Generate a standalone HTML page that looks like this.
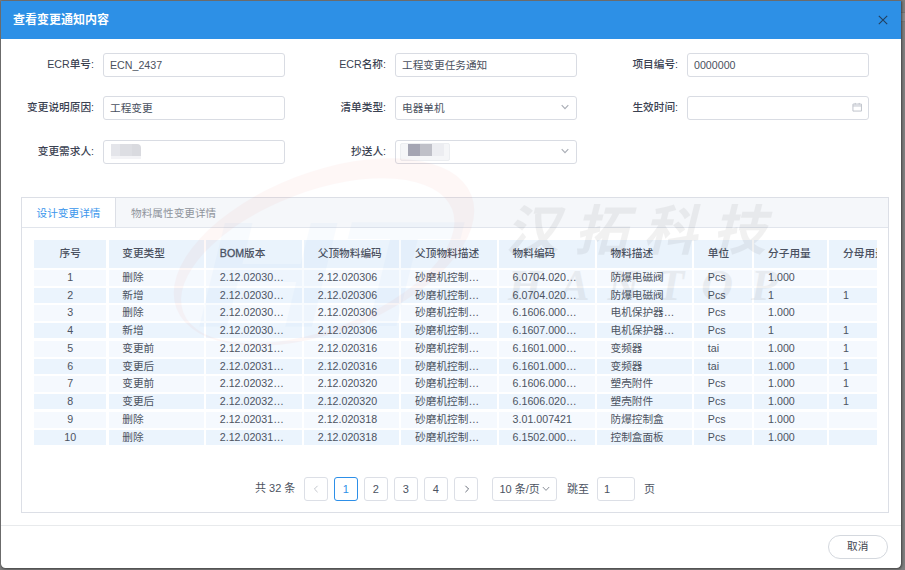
<!DOCTYPE html><html lang="zh-CN"><head><meta charset="utf-8"><title>查看变更通知内容</title><style>*{box-sizing:border-box;margin:0;padding:0}
html,body{width:905px;height:570px;overflow:hidden}
body{background:#808080;font-family:"Liberation Sans","Noto Sans CJK SC",sans-serif;font-size:10.67px;color:#3f4550;position:relative}
.abs{position:absolute}
.modal{position:absolute;left:1px;top:1px;width:900px;height:566.5px;background:#fff;border-radius:0 0 4.5px 4.5px;overflow:hidden;box-shadow:0.5px 0.5px 2.5px rgba(0,0,0,.5)}
.hdr{position:absolute;left:0;top:0;width:900px;height:38px;background:#2d90e6}
.title{position:absolute;left:13px;top:11px;height:18px;line-height:18px;color:#fff;font-weight:bold;font-size:12px;white-space:nowrap}
.lbl{position:absolute;height:24px;line-height:22px;font-weight:500;text-align:right;width:90px;white-space:nowrap;color:#3a4151;font-size:10.67px;}
.inp{position:absolute;height:23.5px;width:182px;border:1px solid #d9dce3;border-radius:3px;background:#fff;line-height:23.5px;padding-left:6px;font-size:10.67px;color:#4a5160;white-space:nowrap}
.tabs{position:absolute;left:21px;top:197px;width:868px;height:316px;border:1px solid #dcdfe6}
.tabbar{position:absolute;left:0;top:0;width:866px;height:30px;background:#f5f7fa;border-bottom:1px solid #e1e5ec}
.tab{position:absolute;top:0;height:30px;line-height:31.5px;font-size:10.67px;white-space:nowrap}
.tab.on{left:0;width:94px;background:#fff;color:#3a96ec;border-right:1px solid #dcdfe6;height:29px;text-align:center}
.tab.off{left:109px;color:#8f949c}
.tbl{position:absolute;left:0;top:0}
.th{position:absolute;top:240.3px;height:27.3px;line-height:26.5px;background:#eaf3fc;font-weight:500;color:#4a5160;padding-left:13.8px;white-space:nowrap;overflow:hidden;font-size:10.67px;}
.th.c,.td.c{text-align:center;padding-left:0}
.td{position:absolute;height:15.1px;line-height:15.1px;background:#f5f9fe;color:#4c5361;padding-left:13.8px;white-space:nowrap;overflow:hidden;font-size:10.67px;}
.td.e{background:#ebf4fd}
.td.o{height:16px}
.pg{position:absolute;top:477px;height:23.5px;border:1px solid #dcdfe6;border-radius:3px;background:#fff;text-align:center;line-height:23px;font-size:11px;color:#4c5361;white-space:nowrap}
.pg.on{border-color:#2d8fe8;color:#2d8fe8}
.ptxt{position:absolute;top:477px;height:23.5px;line-height:23.5px;font-size:11px;color:#4c5361;white-space:nowrap;}
.foot{position:absolute;left:1px;top:525px;width:900px;height:1px;background:#e8eaec}
.btn{position:absolute;left:828px;top:535px;width:59.5px;height:23.5px;border:1px solid #d4d8de;border-radius:12px;background:#fff;text-align:center;line-height:21.5px;font-size:10.67px;color:#3f4550;}

.chev{position:absolute}
.tag{position:absolute;left:399.5px;top:143px;width:50.5px;height:18px;background:#f5f6f8;border:1px solid #eceef1;border-radius:2px}
.blk{position:absolute}

.th i{font-style:normal;-webkit-text-stroke:0.3px #4a5160}
.wm{position:absolute;left:0;top:0;pointer-events:none}
</style></head><body>
<div class="abs" style="left:901px;top:11.5px;width:4px;height:10px;background:#8b8b8b;border-top:1px solid #747474;border-bottom:1px solid #787878"></div>
<div class="modal">
<div class="hdr"></div>
</div>
<div class="title">查看变更通知内容</div>
<svg class="abs" style="left:878px;top:15px" width="10" height="10" viewBox="0 0 10 10"><path d="M0.8 0.8 L9.2 9.2 M9.2 0.8 L0.8 9.2" stroke="#23405f" stroke-width="1.1" fill="none"/></svg>

<div class="lbl" style="left:4px;top:53px">ECR单号:</div>
<div class="inp" style="left:103px;top:53px">ECN_2437</div>
<div class="lbl" style="left:296px;top:53px">ECR名称:</div>
<div class="inp" style="left:395px;top:53px">工程变更任务通知</div>
<div class="lbl" style="left:588px;top:53px">项目编号:</div>
<div class="inp" style="left:687px;top:53px">0000000</div>

<div class="lbl" style="left:4px;top:96px">变更说明原因:</div>
<div class="inp" style="left:103px;top:96px">工程变更</div>
<div class="lbl" style="left:296px;top:96px">清单类型:</div>
<div class="inp" style="left:395px;top:96px">电器单机</div>
<div class="lbl" style="left:588px;top:96px">生效时间:</div>
<div class="inp" style="left:687px;top:96px"></div>

<div class="lbl" style="left:4px;top:139.5px">变更需求人:</div>
<div class="inp" style="left:103px;top:139.8px;height:24px"></div>
<div class="lbl" style="left:296px;top:139.5px">抄送人:</div>
<div class="inp" style="left:395px;top:139.8px;height:24px"></div>

<svg class="chev" style="left:561px;top:104px" width="8" height="6" viewBox="0 0 8 6"><path d="M0.7 1.2 L4 4.6 L7.3 1.2" stroke="#aaaeb6" stroke-width="1.15" fill="none"/></svg>
<svg class="chev" style="left:561px;top:147.5px" width="8" height="6" viewBox="0 0 8 6"><path d="M0.7 1.2 L4 4.6 L7.3 1.2" stroke="#aaaeb6" stroke-width="1.15" fill="none"/></svg>
<svg class="chev" style="left:851.6px;top:102.3px" width="10.4" height="10.4" viewBox="0 0 11 11"><path d="M1 2.2 H10 V9.6 H1 Z M1 4.2 H10 M3.4 1 V2.6 M7.6 1 V2.6" stroke="#bcc0c9" stroke-width="1" fill="none"/></svg>
<div class="tag"></div>
<div class="blk" style="left:408.2px;top:144px;width:11.4px;height:11.6px;background:#a4a5b3"></div>
<div class="blk" style="left:419.6px;top:144px;width:12.2px;height:11.6px;background:#bfc0c8"></div>
<div class="blk" style="left:431.8px;top:144px;width:12px;height:11.6px;background:#ecedf1"></div>
<div class="blk" style="left:111px;top:144px;width:9px;height:11.8px;background:#e4e5ea"></div>
<div class="blk" style="left:120px;top:144px;width:12px;height:11.8px;background:#dddee3"></div>
<div class="blk" style="left:132px;top:144px;width:8.8px;height:11.8px;background:#d9dadf;border-radius:0 4px 0 0"></div>
<div class="blk" style="left:111px;top:155.8px;width:29.8px;height:3.2px;background:#f3f3f6"></div>
<div class="tabs">
 <div class="tabbar"></div>
 <div class="tab on">设计变更详情</div>
 <div class="tab off">物料属性变更详情</div>
</div>

<div class="tbl">
<div class="th c" style="left:34px;width:72.4px">序号</div>
<div class="th" style="left:108.5px;width:95.4px">变更类型</div>
<div class="th" style="left:206px;width:95.9px"><i>BOM</i>版本</div>
<div class="th" style="left:304px;width:95.2px">父顶物料编码</div>
<div class="th" style="left:401.3px;width:95.4px">父顶物料描述</div>
<div class="th" style="left:498.8px;width:95.8px">物料编码</div>
<div class="th" style="left:596.7px;width:95.2px">物料描述</div>
<div class="th" style="left:694px;width:58.2px">单位</div>
<div class="th" style="left:754.3px;width:72.9px">分子用量</div>
<div class="th" style="left:829.3px;width:47.7px">分母用量</div>
<div class="td c o" style="left:34px;top:269.75px;width:72.4px">1</div>
<div class="td o" style="left:108.5px;top:269.75px;width:95.4px">删除</div>
<div class="td o" style="left:206px;top:269.75px;width:95.9px">2.12.02030…</div>
<div class="td o" style="left:304px;top:269.75px;width:95.2px">2.12.020306</div>
<div class="td o" style="left:401.3px;top:269.75px;width:95.4px">砂磨机控制…</div>
<div class="td o" style="left:498.8px;top:269.75px;width:95.8px">6.0704.020…</div>
<div class="td o" style="left:596.7px;top:269.75px;width:95.2px">防爆电磁阀</div>
<div class="td o" style="left:694px;top:269.75px;width:58.2px">Pcs</div>
<div class="td o" style="left:754.3px;top:269.75px;width:72.9px">1.000</div>
<div class="td o" style="left:829.3px;top:269.75px;width:47.7px"></div>
<div class="td c e" style="left:34px;top:287.53px;width:72.4px">2</div>
<div class="td e" style="left:108.5px;top:287.53px;width:95.4px">新增</div>
<div class="td e" style="left:206px;top:287.53px;width:95.9px">2.12.02030…</div>
<div class="td e" style="left:304px;top:287.53px;width:95.2px">2.12.020306</div>
<div class="td e" style="left:401.3px;top:287.53px;width:95.4px">砂磨机控制…</div>
<div class="td e" style="left:498.8px;top:287.53px;width:95.8px">6.0704.020…</div>
<div class="td e" style="left:596.7px;top:287.53px;width:95.2px">防爆电磁阀</div>
<div class="td e" style="left:694px;top:287.53px;width:58.2px">Pcs</div>
<div class="td e" style="left:754.3px;top:287.53px;width:72.9px">1</div>
<div class="td e" style="left:829.3px;top:287.53px;width:47.7px">1</div>
<div class="td c o" style="left:34px;top:305.31px;width:72.4px">3</div>
<div class="td o" style="left:108.5px;top:305.31px;width:95.4px">删除</div>
<div class="td o" style="left:206px;top:305.31px;width:95.9px">2.12.02030…</div>
<div class="td o" style="left:304px;top:305.31px;width:95.2px">2.12.020306</div>
<div class="td o" style="left:401.3px;top:305.31px;width:95.4px">砂磨机控制…</div>
<div class="td o" style="left:498.8px;top:305.31px;width:95.8px">6.1606.000…</div>
<div class="td o" style="left:596.7px;top:305.31px;width:95.2px">电机保护器…</div>
<div class="td o" style="left:694px;top:305.31px;width:58.2px">Pcs</div>
<div class="td o" style="left:754.3px;top:305.31px;width:72.9px">1.000</div>
<div class="td o" style="left:829.3px;top:305.31px;width:47.7px"></div>
<div class="td c e" style="left:34px;top:323.09px;width:72.4px">4</div>
<div class="td e" style="left:108.5px;top:323.09px;width:95.4px">新增</div>
<div class="td e" style="left:206px;top:323.09px;width:95.9px">2.12.02030…</div>
<div class="td e" style="left:304px;top:323.09px;width:95.2px">2.12.020306</div>
<div class="td e" style="left:401.3px;top:323.09px;width:95.4px">砂磨机控制…</div>
<div class="td e" style="left:498.8px;top:323.09px;width:95.8px">6.1607.000…</div>
<div class="td e" style="left:596.7px;top:323.09px;width:95.2px">电机保护器…</div>
<div class="td e" style="left:694px;top:323.09px;width:58.2px">Pcs</div>
<div class="td e" style="left:754.3px;top:323.09px;width:72.9px">1</div>
<div class="td e" style="left:829.3px;top:323.09px;width:47.7px">1</div>
<div class="td c o" style="left:34px;top:340.87px;width:72.4px">5</div>
<div class="td o" style="left:108.5px;top:340.87px;width:95.4px">变更前</div>
<div class="td o" style="left:206px;top:340.87px;width:95.9px">2.12.02031…</div>
<div class="td o" style="left:304px;top:340.87px;width:95.2px">2.12.020316</div>
<div class="td o" style="left:401.3px;top:340.87px;width:95.4px">砂磨机控制…</div>
<div class="td o" style="left:498.8px;top:340.87px;width:95.8px">6.1601.000…</div>
<div class="td o" style="left:596.7px;top:340.87px;width:95.2px">变频器</div>
<div class="td o" style="left:694px;top:340.87px;width:58.2px">tai</div>
<div class="td o" style="left:754.3px;top:340.87px;width:72.9px">1.000</div>
<div class="td o" style="left:829.3px;top:340.87px;width:47.7px">1</div>
<div class="td c e" style="left:34px;top:358.65px;width:72.4px">6</div>
<div class="td e" style="left:108.5px;top:358.65px;width:95.4px">变更后</div>
<div class="td e" style="left:206px;top:358.65px;width:95.9px">2.12.02031…</div>
<div class="td e" style="left:304px;top:358.65px;width:95.2px">2.12.020316</div>
<div class="td e" style="left:401.3px;top:358.65px;width:95.4px">砂磨机控制…</div>
<div class="td e" style="left:498.8px;top:358.65px;width:95.8px">6.1601.000…</div>
<div class="td e" style="left:596.7px;top:358.65px;width:95.2px">变频器</div>
<div class="td e" style="left:694px;top:358.65px;width:58.2px">tai</div>
<div class="td e" style="left:754.3px;top:358.65px;width:72.9px">1.000</div>
<div class="td e" style="left:829.3px;top:358.65px;width:47.7px">1</div>
<div class="td c o" style="left:34px;top:376.43px;width:72.4px">7</div>
<div class="td o" style="left:108.5px;top:376.43px;width:95.4px">变更前</div>
<div class="td o" style="left:206px;top:376.43px;width:95.9px">2.12.02032…</div>
<div class="td o" style="left:304px;top:376.43px;width:95.2px">2.12.020320</div>
<div class="td o" style="left:401.3px;top:376.43px;width:95.4px">砂磨机控制…</div>
<div class="td o" style="left:498.8px;top:376.43px;width:95.8px">6.1606.000…</div>
<div class="td o" style="left:596.7px;top:376.43px;width:95.2px">塑壳附件</div>
<div class="td o" style="left:694px;top:376.43px;width:58.2px">Pcs</div>
<div class="td o" style="left:754.3px;top:376.43px;width:72.9px">1.000</div>
<div class="td o" style="left:829.3px;top:376.43px;width:47.7px">1</div>
<div class="td c e" style="left:34px;top:394.21px;width:72.4px">8</div>
<div class="td e" style="left:108.5px;top:394.21px;width:95.4px">变更后</div>
<div class="td e" style="left:206px;top:394.21px;width:95.9px">2.12.02032…</div>
<div class="td e" style="left:304px;top:394.21px;width:95.2px">2.12.020320</div>
<div class="td e" style="left:401.3px;top:394.21px;width:95.4px">砂磨机控制…</div>
<div class="td e" style="left:498.8px;top:394.21px;width:95.8px">6.1606.020…</div>
<div class="td e" style="left:596.7px;top:394.21px;width:95.2px">塑壳附件</div>
<div class="td e" style="left:694px;top:394.21px;width:58.2px">Pcs</div>
<div class="td e" style="left:754.3px;top:394.21px;width:72.9px">1.000</div>
<div class="td e" style="left:829.3px;top:394.21px;width:47.7px">1</div>
<div class="td c o" style="left:34px;top:411.99px;width:72.4px">9</div>
<div class="td o" style="left:108.5px;top:411.99px;width:95.4px">删除</div>
<div class="td o" style="left:206px;top:411.99px;width:95.9px">2.12.02031…</div>
<div class="td o" style="left:304px;top:411.99px;width:95.2px">2.12.020318</div>
<div class="td o" style="left:401.3px;top:411.99px;width:95.4px">砂磨机控制…</div>
<div class="td o" style="left:498.8px;top:411.99px;width:95.8px">3.01.007421</div>
<div class="td o" style="left:596.7px;top:411.99px;width:95.2px">防爆控制盒</div>
<div class="td o" style="left:694px;top:411.99px;width:58.2px">Pcs</div>
<div class="td o" style="left:754.3px;top:411.99px;width:72.9px">1.000</div>
<div class="td o" style="left:829.3px;top:411.99px;width:47.7px"></div>
<div class="td c e" style="left:34px;top:429.77px;width:72.4px">10</div>
<div class="td e" style="left:108.5px;top:429.77px;width:95.4px">删除</div>
<div class="td e" style="left:206px;top:429.77px;width:95.9px">2.12.02031…</div>
<div class="td e" style="left:304px;top:429.77px;width:95.2px">2.12.020318</div>
<div class="td e" style="left:401.3px;top:429.77px;width:95.4px">砂磨机控制…</div>
<div class="td e" style="left:498.8px;top:429.77px;width:95.8px">6.1502.000…</div>
<div class="td e" style="left:596.7px;top:429.77px;width:95.2px">控制盒面板</div>
<div class="td e" style="left:694px;top:429.77px;width:58.2px">Pcs</div>
<div class="td e" style="left:754.3px;top:429.77px;width:72.9px">1.000</div>
<div class="td e" style="left:829.3px;top:429.77px;width:47.7px"></div>
</div>
<div class="ptxt" style="left:255px">共 32 条</div>
<div class="pg" style="left:304px;width:23.5px"></div>
<svg class="chev" style="left:313px;top:485px" width="6" height="8" viewBox="0 0 6 8"><path d="M4.6 0.8 L1.4 4 L4.6 7.2" stroke="#c3c6cc" stroke-width="1" fill="none"/></svg>
<div class="pg on" style="left:334px;width:23.5px">1</div>
<div class="pg" style="left:364px;width:23.5px">2</div>
<div class="pg" style="left:394px;width:23.5px">3</div>
<div class="pg" style="left:424px;width:23.5px">4</div>
<div class="pg" style="left:454px;width:24px"></div>
<svg class="chev" style="left:463.5px;top:485px" width="6" height="8" viewBox="0 0 6 8"><path d="M1.4 0.8 L4.6 4 L1.4 7.2" stroke="#6b707b" stroke-width="1" fill="none"/></svg>
<div class="pg" style="left:492px;width:64.5px;text-align:left;padding-left:6.5px;">10 条/页</div>
<svg class="chev" style="left:541.5px;top:486px" width="8" height="6" viewBox="0 0 8 6"><path d="M0.8 1 L4 4.4 L7.2 1" stroke="#8a8f99" stroke-width="1" fill="none"/></svg>
<div class="ptxt" style="left:567px;top:477.6px">跳至</div>
<div class="pg" style="left:597px;width:38px;text-align:left;padding-left:6px">1</div>
<div class="ptxt" style="left:644px;top:477.6px">页</div>
<div class="foot"></div>
<div class="btn">取消</div>

<svg class="wm" width="905" height="570" viewBox="0 0 905 570">
<g opacity="0.035">
<path fill="#e8332a" fill-rule="evenodd" transform="rotate(-21 324 252)" d="M166 252 a158 80 0 1 0 316 0 a158 80 0 1 0 -316 0 Z M171 258 a144 69 0 1 0 288 0 a144 69 0 1 0 -288 0 Z"/>
</g>
<g opacity="0.028">
<text x="196" y="326" font-family="'Liberation Sans',sans-serif" font-weight="bold" font-style="italic" font-size="150" fill="#2d7fe0" textLength="255" lengthAdjust="spacingAndGlyphs">HT</text>
</g>
<g opacity="0.05" fill="#000">
<text x="505" y="250" font-family="'Noto Sans CJK SC',sans-serif" font-weight="bold" font-style="italic" font-size="54" letter-spacing="15">汉拓科技</text>
<text x="508" y="300" font-family="'Liberation Serif',serif" font-weight="bold" font-style="italic" font-size="44" textLength="270">HANTOP</text>
</g>
</svg>

</body></html>
